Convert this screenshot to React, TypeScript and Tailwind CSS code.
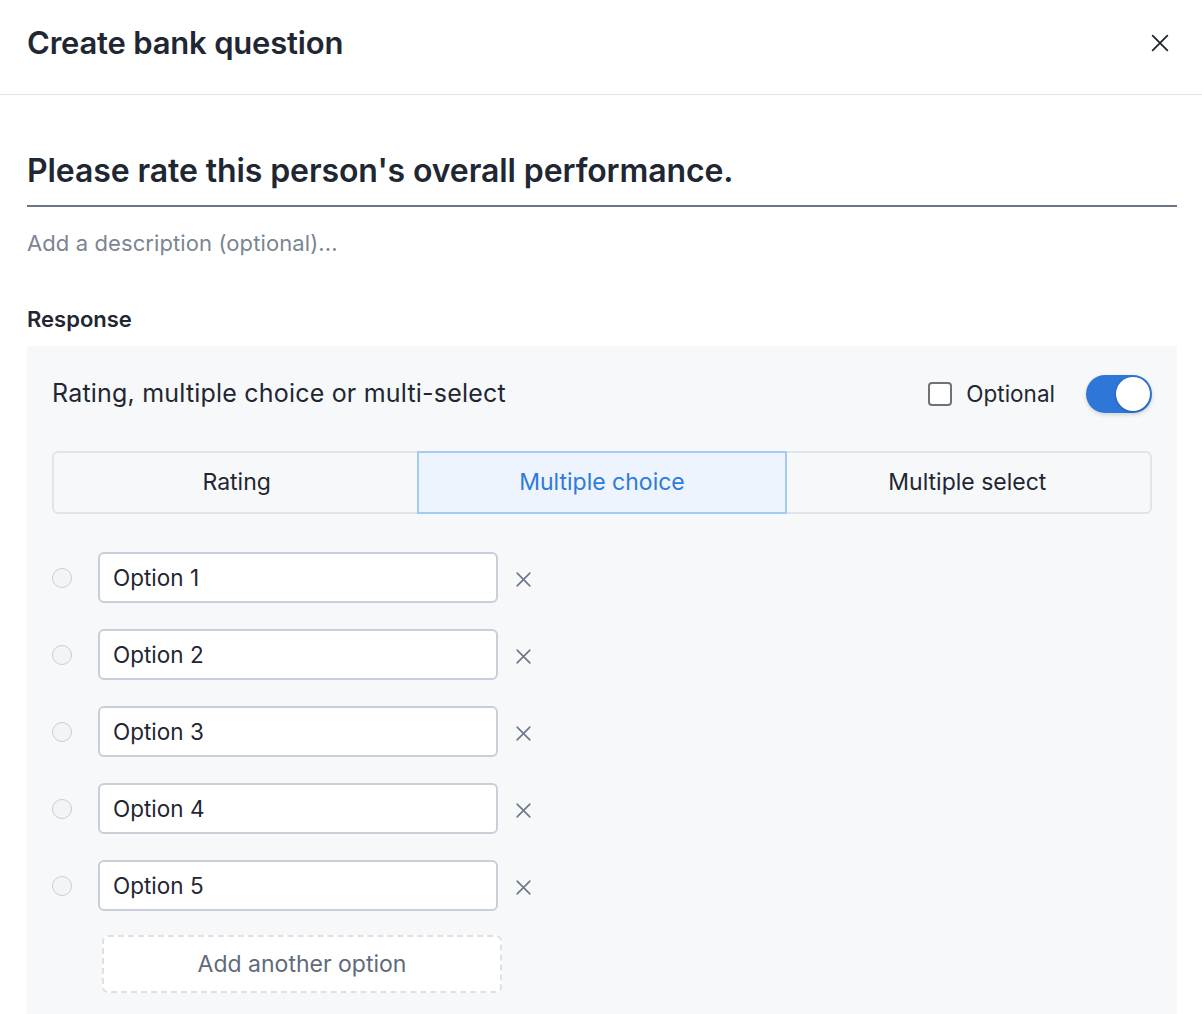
import { useState } from "react";

const font = { fontFamily: "Inter, 'Noto Sans', sans-serif" };

const CloseIcon = ({ className }: { className?: string }) => (
  <svg viewBox="0 0 24 24" fill="none" stroke="currentColor" strokeWidth="2" strokeLinecap="round" className={className}>
    <path d="M4 4l16 16M20 4L4 20" />
  </svg>
);

const types = ["Rating", "Multiple choice", "Multiple select"];

const App = () => {
  const [selected, setSelected] = useState("Multiple choice");
  const [options] = useState(["Option 1", "Option 2", "Option 3", "Option 4", "Option 5"]);

  return (
    <div className="w-[1202px] h-[1014px] overflow-hidden bg-white text-[#1f2733]" style={font}>
      <div className="h-[95px] flex items-center justify-between pl-[27px] pr-[31px] border-b border-[#e1e4e8]">
        <h1 className="text-[31px] font-semibold tracking-[-0.2px] pb-[8px]">Create bank question</h1>
        <button className="text-[#1f2733] pb-[8px]">
          <CloseIcon className="w-[22px] h-[22px]" />
        </button>
      </div>

      <div className="pl-[27px] pr-[25px] pt-[57px]">
        <div className="border-b-2 border-[#6b7685] pb-[15px]">
          <h2 className="text-[32px] font-semibold leading-[38px] tracking-[-0.1px]">
            Please rate this person's overall performance.
          </h2>
        </div>
        <p className="mt-[22px] text-[22px] text-[#7b8594] leading-[28px] tracking-[0.1px]">Add a description (optional)...</p>

        <h3 className="mt-[48px] text-[22px] font-semibold leading-[28px]">Response</h3>

        <div className="mt-[13px] bg-[#f7f8fa] px-[25px] pt-[28px] pb-[40px]">
          <div className="flex items-center justify-between h-[40px]">
            <span className="text-[25px] tracking-[0.2px]">Rating, multiple choice or multi-select</span>
            <div className="flex items-center">
              <label className="flex items-center gap-[14px]">
                <span className="w-[24px] h-[24px] rounded-[4px] border-2 border-[#6e7378] bg-white" />
                <span className="text-[22.5px]">Optional</span>
              </label>
              <div className="ml-[31px] w-[66px] h-[38px] rounded-full bg-[#2f76d9] relative shadow-[0_2px_4px_rgba(0,0,0,0.15)]">
                <span className="absolute right-[2px] top-[2px] w-[34px] h-[34px] rounded-full bg-white shadow-[0_1px_3px_rgba(0,0,0,0.25)]" />
              </div>
            </div>
          </div>

          <div className="mt-[37px] grid grid-cols-3 h-[63px] rounded-[6px] border-2 border-[#e1e4e8] bg-[#f7f8fa]">
            {types.map((t, i) => {
              const active = t === selected;
              return (
                <button
                  key={t}
                  onClick={() => setSelected(t)}
                  className={
                    "text-[23px] flex items-center justify-center " +
                    (active
                      ? "bg-[#edf4fe] text-[#2f7bd9] outline-2 outline-[#a3ccf3] relative z-10"
                      : "") +
                    (i === 0 ? " rounded-l-[5px]" : "") +
                    (i === 2 ? " rounded-r-[5px]" : "")
                  }
                >
                  {t}
                </button>
              );
            })}
          </div>

          <div className="mt-[38px] flex flex-col gap-[26px]">
            {options.map((o) => (
              <div key={o} className="flex items-center">
                <span className="w-[20px] h-[20px] rounded-full border border-[#c9ced4] bg-[#f3f4f6]" />
                <div className="ml-[26px] w-[400px] h-[51px] rounded-[6px] border-2 border-[#c8cfd8] bg-white flex items-center px-[13px] text-[22.5px]">
                  {o}
                </div>
                <button className="ml-[16px] mt-[4px] text-[#6b7685]">
                  <CloseIcon className="w-[19px] h-[19px]" />
                </button>
              </div>
            ))}
          </div>

          <button className="mt-[24px] ml-[50px] w-[400px] h-[58px] rounded-[6px] border-2 border-dashed border-[#dde0e5] bg-white text-[23px] text-[#5f6b7a] flex items-center justify-center">
            Add another option
          </button>
        </div>
      </div>
    </div>
  );
};

export default App;
